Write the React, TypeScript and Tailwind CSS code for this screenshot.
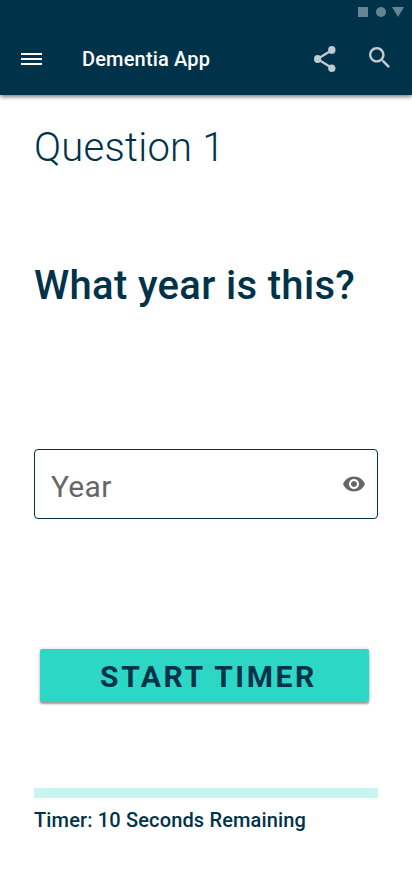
export default function App() {
  return (
    <div className="flex h-[870px] w-[412px] flex-col bg-white font-['Roboto','Liberation_Sans',sans-serif] text-[#003349] antialiased">
      <header className="h-[95px] bg-[#003349] text-white shadow-[0_2px_4px_rgba(0,0,0,0.5)]">
        <div className="flex h-6 items-center justify-end pr-2">
          <svg width="46" height="12" viewBox="0 0 46 12" fill="#668593">
            <rect x="0" y="1" width="10" height="10" />
            <circle cx="23" cy="6" r="5" />
            <path d="M34 1h12l-6 10z" />
          </svg>
        </div>
        <div className="flex h-[70px] items-center pl-5">
          <svg width="24" height="24" viewBox="0 0 24 24" fill="white"><path d="M1 6h21v2H1zM1 11h21v2H1zM1 16h21v2H1z" /></svg>
          <h1 className="ml-[38px] w-[232px] text-[20px] leading-6 font-medium tracking-[0.17px]">Dementia App</h1>
          <svg width="22" height="26" viewBox="0 0 22 26" fill="#bfccd1">
            <path d="M3.5 13 18 4M3.5 13 18 22" fill="none" stroke="#bfccd1" strokeWidth="2.2" />
            <ellipse cx="3.6" cy="13" rx="3.6" ry="4" />
            <ellipse cx="17.8" cy="3.9" rx="3.7" ry="3.9" />
            <ellipse cx="17.8" cy="22.2" rx="3.6" ry="3.8" />
          </svg>
          <svg className="mb-[3px] ml-[33px]" width="21" height="21" viewBox="3 3 17.5 17.5" fill="#bfccd1">
            <path d="M15.5 14h-.79l-.28-.27C15.41 12.59 16 11.11 16 9.5 16 5.91 13.09 3 9.5 3S3 5.91 3 9.5 5.91 16 9.5 16c1.61 0 3.09-.59 4.23-1.57l.27.28v.79l5 4.99L20.49 19l-4.99-5zm-6 0C7.01 14 5 11.99 5 9.5S7.01 5 9.5 5 14 7.01 14 9.5 11.99 14 9.5 14z" />
          </svg>
        </div>
      </header>
      <main className="flex flex-col px-[34px]">
        <h2 className="mt-[29px] text-[40px] leading-[48px] font-light tracking-[0.25px]">Question 1</h2>
        <p className="mt-[90px] text-[40px] leading-[48px] font-medium tracking-[0.33px] whitespace-nowrap">What year is this?</p>
        <div className="mt-[139px] flex h-[70px] items-center justify-between rounded border border-[#003349] pr-[11px] pl-4 text-[#666]">
          <span className="mt-[5px] text-[30px] tracking-[0.3px]">Year</span>
          <svg width="24" height="24" viewBox="0 0 24 24" fill="#666">
            <path d="M12 4.5C7 4.5 2.73 7.61 1 12c1.73 4.39 6 7.5 11 7.5s9.27-3.11 11-7.5c-1.73-4.39-6-7.5-11-7.5zM12 17c-2.76 0-5-2.24-5-5s2.24-5 5-5 5 2.24 5 5-2.24 5-5 5zm0-8c-1.66 0-3 1.34-3 3s1.34 3 3 3 3-1.34 3-3-1.34-3-3-3z" />
          </svg>
        </div>
        <button className="mt-[130px] ml-1.5 h-[53px] w-[329px] rounded-xs bg-[#2dd7c6] pt-0.5 pl-[8px] text-[30px] font-bold tracking-[2.6px] shadow-[0_2px_2px_rgba(0,0,0,0.35),0_0_4px_rgba(0,0,0,0.15)]">START TIMER</button>
        <div className="mt-[86px] h-[10px] bg-[#caf4f0]" />
        <p className="mt-[10px] text-[20px] leading-6 font-medium tracking-[0.15px]">Timer: 10 Seconds Remaining</p>
      </main>
    </div>
  );
}
